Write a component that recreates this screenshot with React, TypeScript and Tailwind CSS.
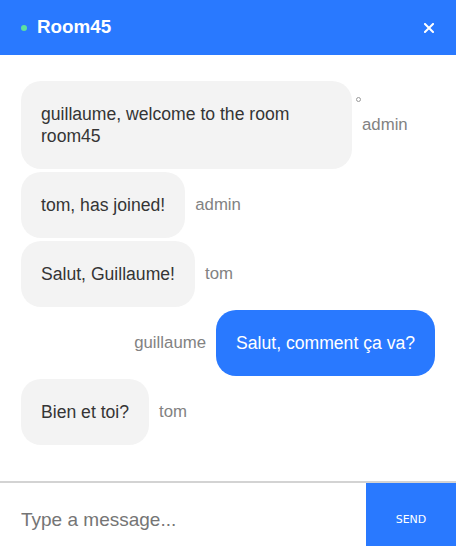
import React from 'react';

type Msg = { text: string; user: string; mine?: boolean; dot?: boolean };

const messages: Msg[] = [
  { text: 'guillaume, welcome to the room room45', user: 'admin', dot: true },
  { text: 'tom, has joined!', user: 'admin' },
  { text: 'Salut, Guillaume!', user: 'tom' },
  { text: 'Salut, comment ça va?', user: 'guillaume', mine: true },
  { text: 'Bien et toi?', user: 'tom' },
];

function Message({ msg }: { msg: Msg }) {
  if (msg.mine) {
    return (
      <div className="flex items-center justify-end">
        <span className="pr-[10px] text-[16.8px] text-[#828282]">{msg.user}</span>
        <div className="rounded-[20px] bg-[#2979ff] px-[20px] py-[22px] text-[17.6px] leading-[22px] text-white">
          {msg.text}
        </div>
      </div>
    );
  }
  return (
    <div className="flex items-center">
      <div className="max-w-[331px] rounded-[20px] bg-[#f3f3f3] px-[20px] py-[22px] text-[17.6px] leading-[22px] text-[#353535]">
        {msg.text}
      </div>
      <span className="relative pl-[10px] text-[16.8px] text-[#828282]">
        {msg.dot && (
          <span className="absolute left-[4px] top-[-15px] h-[5px] w-[5px] rounded-full border border-[#9a9a9a]" />
        )}
        {msg.user}
      </span>
    </div>
  );
}

export default function App() {
  return (
    <div className="flex w-[456px] flex-col bg-white font-['Liberation_Sans',Arial,sans-serif]">
      {/* header */}
      <div className="flex h-[55px] shrink-0 items-center justify-between bg-[#2979ff] pl-[21px] pr-[21px]">
        <div className="flex items-center">
          <span className="h-[6px] w-[6px] rounded-full bg-[#5ce0a0]" />
          <h3 className="ml-[10px] text-[18.8px] font-bold text-white">Room45</h3>
        </div>
        <svg width="10" height="10" viewBox="0 0 10 10" className="mr-[1px]">
          <path d="M1 1 L9 9 M9 1 L1 9" stroke="white" strokeWidth="2" strokeLinecap="square" />
        </svg>
      </div>

      {/* messages */}
      <div className="flex h-[426px] flex-col gap-[3px] overflow-hidden px-[21px] pt-[26px]">
        {messages.map((m, i) => (
          <Message key={i} msg={m} />
        ))}
      </div>

      {/* input */}
      <form className="flex h-[76px] border-t-2 border-[#d3d3d3]" onSubmit={(e) => e.preventDefault()}>
        <input
          type="text"
          placeholder="Type a message..."
          className="min-w-0 flex-1 px-[21px] text-[19px] text-[#353535] outline-none placeholder:text-[#757575]"
        />
        <button
          type="submit"
          className="w-[90px] bg-[#2979ff] font-['DejaVu_Sans',sans-serif] text-[11px] text-white"
        >
          SEND
        </button>
      </form>
    </div>
  );
}
